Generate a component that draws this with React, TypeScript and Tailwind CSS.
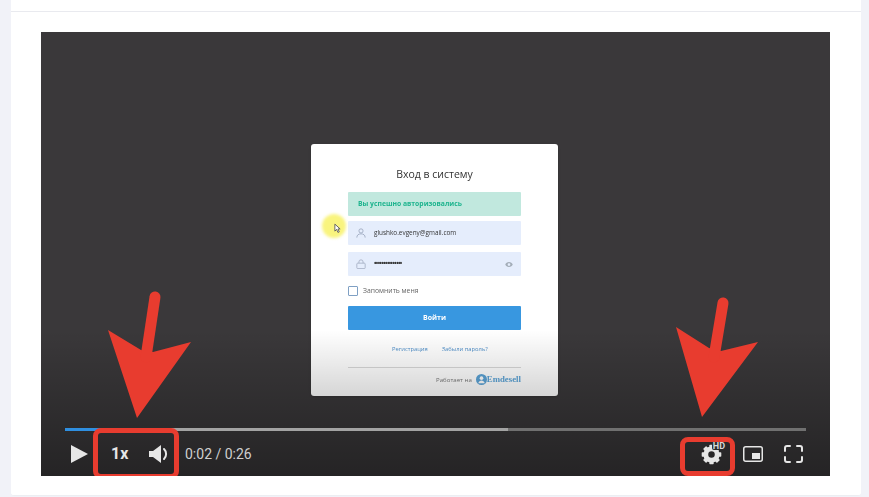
function LoginCard() {
  return (
    <div className="ml-[270px] mt-[112px] h-[252px] w-[247px] rounded-[3px] bg-white px-[37px] pt-[23px] font-['Open_Sans',sans-serif] shadow-sm">
      <h1 className="h-[14px] text-center text-[10.5px] leading-[14px] text-[#333] blur-[0.3px]">Вход в систему</h1>

      <div className="mt-[11px] flex h-[24px] items-center rounded-[1px] bg-[#c1e8de] pl-[10px] text-[6.8px] font-bold text-[#1eb48e] blur-[0.35px]">
        Вы успешно авторизовались
      </div>

      {/* Email */}
      <div className="mt-[5px] flex h-[24px] items-center rounded-[1px] bg-[#e5edfc] pl-[8px] text-[6.4px] text-[#333] blur-[0.35px]">
        <svg viewBox="0 0 12 12" className="mr-[8px] h-[10px] w-[10px] text-[#9aa6bd]" fill="none" stroke="currentColor" strokeWidth="1">
          <circle cx="6" cy="3.5" r="2.500" />
          <path d="M1 11.500c0-3 2-4.500 5-4.500s5 1.500 5 4.500" />
        </svg>
        <span>glushko.evgeny@gmail.com</span>
      </div>

      {/* Password */}
      <div className="mt-[7px] flex h-[24px] items-center rounded-[1px] bg-[#e5edfc] px-[8px] text-[#333] blur-[0.3px]">
        <svg viewBox="0 0 12 12" className="mr-[8px] h-[10px] w-[10px] text-[#a3adc2]" fill="none" stroke="currentColor" strokeWidth="1">
          <path d="M3.500 5V3.500a2.500 2.500 0 0 1 5 0V5" />
          <rect x="1" y="5" width="10" height="6.500" rx="1" />
        </svg>
        <span className="text-[6.5px] font-bold leading-none tracking-[-0.6px]">•••••••••••••••</span>
        <svg viewBox="0 0 12 8" className="ml-auto h-[5px] w-[8px] text-[#a3adb8]" fill="currentColor">
          <path d="M6 0C3 0 1 2 0 4c1 2 3 4 6 4s5-2 6-4c-1-2-3-4-6-4zm0 6.200A2.200 2.200 0 1 1 6 1.800a2.200 2.200 0 0 1 0 4.400z" />
        </svg>
      </div>

      <div className="mt-[10px] flex h-[10px] items-center gap-[5px]">
        <span className="h-[10px] w-[10px] rounded-[1px] border border-[#7fa0c4] bg-white" />
        <span className="text-[6.8px] text-[#666] blur-[0.35px]">Запомнить меня</span>
      </div>

      <button className="mt-[10px] flex h-[24px] w-full items-center justify-center rounded-[1px] bg-[#3897e0] text-[7px] font-bold text-white blur-[0.25px]">
        Войти
      </button>

      <div className="mt-[14px] flex h-[10px] items-center pl-[44px] text-[5.800px] text-[#4f8fc9] blur-[0.35px]">
        <span>Регистрация</span>
        <span className="ml-[14px]">Забыли пароль?</span>
      </div>

      <div className="mt-[13px] border-t border-[#d9d9d9]" />

      <div className="mt-[5px] flex h-[13px] items-center justify-end text-[6.1px] text-[#777] blur-[0.3px]">
        <span className="mr-[4px]">Работает на</span>
        <svg viewBox="0 0 12 12" className="h-[11px] w-[11px]">
          <circle cx="6" cy="6" r="6" fill="#5ba3d6" />
          <circle cx="6" cy="4.500" r="2" fill="#fff" />
          <path d="M2.500 10c.5-2 2-3 3.500-3s3 1 3.500 3z" fill="#fff" />
        </svg>
        <span className="font-['Liberation_Serif',serif] text-[8.800px] font-bold text-[#5ba3d6]">Emdesell</span>
      </div>
    </div>
  );
}

function GearIcon() {
  const teeth = [0, 45, 90, 135, 180, 225, 270, 315];

  return (
    <svg viewBox="0 0 24 24" className="mt-[2px] h-[21px] w-[21px]" fill="currentColor">
      <circle cx="12" cy="12" r="6.500" fill="none" stroke="currentColor" strokeWidth="5.500" />
      {teeth.map((deg) => (
        <rect key={deg} x="9.500" y="0.800" width="5" height="4.500" rx="0.800" transform={`rotate(${deg} 12 12)`} />
      ))}
    </svg>
  );
}

function Controls() {
  return (
    <div className="absolute bottom-0 left-[24px] right-[24px] top-[396px] text-[#e6e6e6]">
      {/* Progress */}
      <div className="flex h-[3px] bg-[#707070]">
        <div className="w-[60px] bg-[#2f8fe0]" />
        <div className="w-[383px] bg-[#a3a3a3]" />
      </div>

      <div className="flex h-[45px] items-center pl-[6px] pr-[3px]">
        <svg viewBox="0 0 17 18" className="h-[18px] w-[17px]" fill="currentColor">
          <path d="M0 0l17 9L0 18z" />
        </svg>

        <span className="ml-[23px] w-[17px] font-['Roboto',sans-serif] text-[16px] font-bold leading-none">1x</span>

        <svg viewBox="0 0 19 18" className="ml-[21px] h-[18px] w-[19px]" fill="none">
          <path d="M0 6h4l8-6v18l-8-6H0z" fill="currentColor" />
          <path d="M15 4a7 7 0 0 1 0 10" stroke="currentColor" strokeWidth="2" strokeLinecap="round" />
        </svg>

        <span className="ml-[17px] font-['Roboto',sans-serif] text-[14px] leading-none text-[#cfcfcf]">0:02 / 0:26</span>

        <div className="relative ml-auto h-[23px] w-[24px]">
          <GearIcon />
          <span className="absolute -right-[1px] top-0 rounded-[2px] bg-[#2b2a2b] px-[1px] font-['Roboto',sans-serif] text-[9px] font-bold leading-[8px] text-[#d8d8d8]">HD</span>
        </div>

        <svg viewBox="0 0 20 16" className="ml-[18px] h-[16px] w-[20px]" fill="none">
          <rect x="0.750" y="0.750" width="18.500" height="14.500" rx="2" stroke="currentColor" strokeWidth="1.500" />
          <rect x="9" y="7" width="8" height="6" fill="currentColor" />
        </svg>

        <svg viewBox="0 0 19 18" className="ml-[21px] h-[18px] w-[19px]" fill="none" stroke="currentColor" strokeWidth="2" strokeLinecap="round">
          <path d="M1 6V3a2 2 0 0 1 2-2h3M13 1h3a2 2 0 0 1 2 2v3M18 12v3a2 2 0 0 1-2 2h-3M6 17H3a2 2 0 0 1-2-2v-3" />
        </svg>
      </div>
    </div>
  );
}

export default function App() {
  return (
    <div className="flex h-[497px] overflow-hidden bg-[#f1f2f8] pl-[11px] font-['Roboto',sans-serif]">
      <div className="h-[496px] w-[850px] rounded-b-[3px] border-b border-[#eceef2] bg-white">
        <div className="h-[12px] border-b border-[#e9eaef]" />

        <div className="pl-[30px] pt-[20px]">
          <div className="relative h-[444px] w-[789px] overflow-hidden bg-[#3a383a]">
            <LoginCard />

            {/* Cursor highlight */}
            <div className="absolute left-[281px] top-[182px] h-[24px] w-[24px] rounded-full bg-[#f9f47e] blur-[1.5px]" />
            <svg viewBox="0 0 8 12" className="absolute left-[293px] top-[191px] h-[11px] w-[7px]" fill="#fff" stroke="#555" strokeWidth="1">
              <path d="M1 1v8l2-2 1.500 3.500 1.500-.7L4.500 6.500H7z" />
            </svg>

            {/* Bottom shade */}
            <div className="absolute inset-x-0 bottom-0 h-[146px] bg-gradient-to-b from-transparent to-black/36" />

            <Controls />

            {/* Annotation boxes */}
            <div className="absolute left-[52px] top-[396px] h-[51px] w-[86px] rounded-[8px] border-[5px] border-[#e83c2f]" />
            <div className="absolute left-[639px] top-[405px] h-[39px] w-[55px] rounded-[8px] border-[5px] border-[#e83c2f]" />

            {/* Annotation arrows */}
            <svg viewBox="0 0 789 444" className="absolute inset-0 h-[444px] w-[789px]">
              <path d="M67 298L96 386L150 310L112 320L100 318z" fill="#e83c2f" />
              <path d="M114 265L105 325" stroke="#e83c2f" strokeWidth="11" strokeLinecap="round" />
              <path d="M635 295L661 385L717 310L680 319L668 316z" fill="#e83c2f" />
              <path d="M682 271L673 325" stroke="#e83c2f" strokeWidth="11" strokeLinecap="round" />
            </svg>
          </div>
        </div>
      </div>
    </div>
  );
}
